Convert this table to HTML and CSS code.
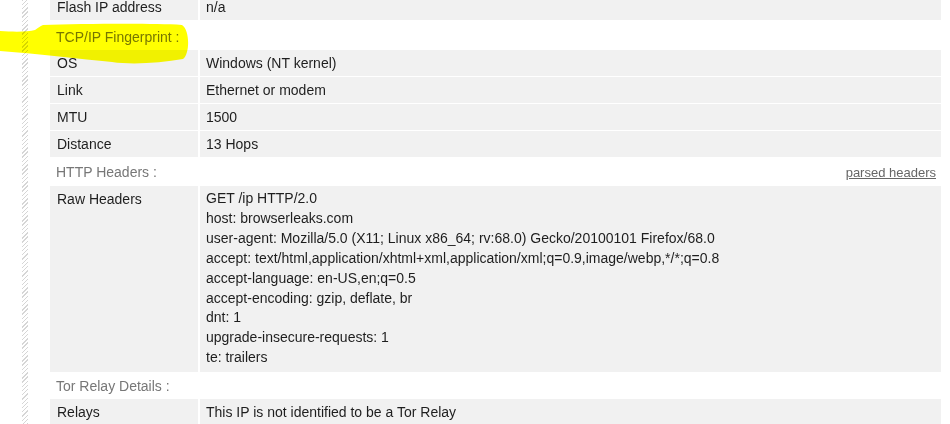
FILE: index.html
```html
<!DOCTYPE html>
<html>
<head>
<meta charset="utf-8">
<link rel="stylesheet" href="styles.css">
</head>
<body>
<div class="page">
  <div class="rail"></div>
  <div class="content">
    <div class="row"><div class="label">Flash IP address</div><div class="value">n/a</div></div>
    <div class="section section-tcp">TCP/IP Fingerprint :</div>
    <div class="row"><div class="label">OS</div><div class="value">Windows (NT kernel)</div></div>
    <div class="row"><div class="label">Link</div><div class="value">Ethernet or modem</div></div>
    <div class="row"><div class="label">MTU</div><div class="value">1500</div></div>
    <div class="row"><div class="label">Distance</div><div class="value">13 Hops</div></div>
    <div class="section section-http"><span>HTTP Headers :</span><a class="parsed" href="#">parsed headers</a></div>
    <div class="row row-tall"><div class="label">Raw Headers</div><div class="value lines">
      <div>GET /ip HTTP/2.0</div>
      <div>host: browserleaks.com</div>
      <div>user-agent: Mozilla/5.0 (X11; Linux x86_64; rv:68.0) Gecko/20100101 Firefox/68.0</div>
      <div>accept: text/html,application/xhtml+xml,application/xml;q=0.9,image/webp,*/*;q=0.8</div>
      <div>accept-language: en-US,en;q=0.5</div>
      <div>accept-encoding: gzip, deflate, br</div>
      <div>dnt: 1</div>
      <div>upgrade-insecure-requests: 1</div>
      <div>te: trailers</div>
    </div></div>
    <div class="section section-tor">Tor Relay Details :</div>
    <div class="row"><div class="label">Relays</div><div class="value">This IP is not identified to be a Tor Relay</div></div>
  </div>
  <svg class="marker" width="200" height="70" viewBox="0 0 200 70">
    <path d="M0,31 C14,32 28,32 35,30 C38,28 40,26 43,25 C80,24 150,23 182,25 C190,30 190,54 183,59 C160,63 132,65 112,62 C80,59 40,54 0,51 Z" fill="#ffff00"/>
  </svg>
</div>
</body>
</html>
```
FILE: styles.css
```css
html, body {
  margin: 0;
  padding: 0;
  background: #ffffff;
}
body {
  font-family: "Liberation Sans", Arial, sans-serif;
  font-size: 14px;
  color: #1e1e1e;
  overflow: hidden;
  height: 424px;
}
.page {
  position: relative;
  display: flex;
  height: 424px;
}
.rail {
  margin-left: 22px;
  width: 6px;
  flex: none;
  background: repeating-linear-gradient(135deg, #d6d6d6 0 1px, #ffffff 1px 3px);
}
.content {
  margin-left: 22px;
  width: 891px;
  margin-top: -6px;
  display: flex;
  flex-direction: column;
}
.row {
  display: flex;
  gap: 2px;
  margin-bottom: 1px;
  flex: none;
}
.label, .value {
  background: #f1f1f1;
  height: 26px;
  line-height: 26px;
  box-sizing: border-box;
}
.label {
  width: 148px;
  flex: none;
  padding-left: 7px;
}
.value {
  flex: 1;
  padding-left: 6px;
}
.row-tall .label, .row-tall .value {
  height: 186px;
}
.lines {
  line-height: 19.9px;
  padding-top: 3px;
}
.section {
  flex: none;
  display: flex;
  justify-content: space-between;
  align-items: center;
  padding-left: 6px;
  padding-right: 5px;
  color: #777777;
  margin-bottom: 0;
}
.section-tcp { height: 29px; padding-top: 2px; box-sizing: border-box; }
.section-http { height: 28px; }
.section-tor { height: 26px; }
.parsed {
  color: #666666;
  font-size: 13px;
  text-decoration: underline;
}
.marker {
  position: absolute;
  left: 0;
  top: 0;
  mix-blend-mode: multiply;
  pointer-events: none;
}
```
